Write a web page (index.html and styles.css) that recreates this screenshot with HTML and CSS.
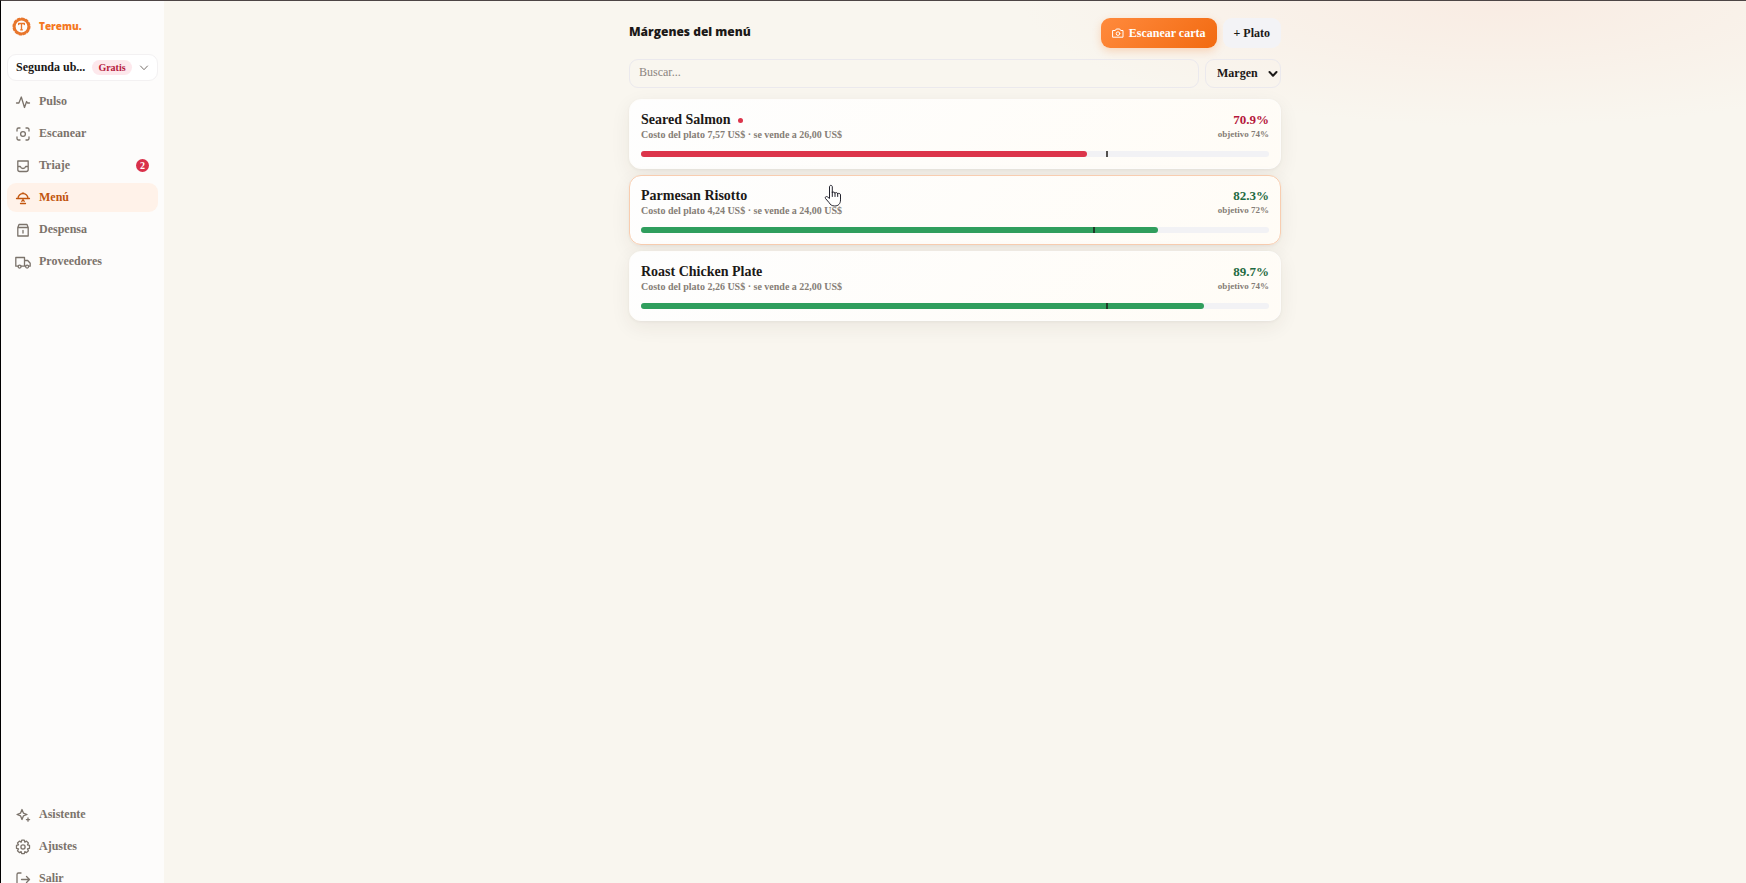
FILE: index.html
```html
<!DOCTYPE html>
<html lang="es">
<head>
    <meta charset="UTF-8">
    <meta name="viewport" content="width=device-width, initial-scale=1.0">
    <title>Teremu - Márgenes del menú</title>
    <link rel="stylesheet" href="styles.css">
</head>
<body>
    <div class="app">
        <aside class="sidebar">
            <a class="brand" href="#">
                <svg class="brand-logo" viewBox="0 0 20 20">
                    <circle cx="10" cy="10" r="7.4" fill="none" stroke="#e8762c" stroke-width="2.4"/>
                    <circle cx="10" cy="10" r="8.600" fill="none" stroke="#e8762c" stroke-width="1.800" stroke-dasharray="2.500 2"/>
                    <path d="M7 8V6.800h6V8M10 7v6.500M9 13.500h2" fill="none" stroke="#e8762c" stroke-width="1.400"/>
                </svg>
                <span>Teremu.</span>
            </a>
            <button class="location" type="button">
                <span class="location-name">Segunda ub...</span>
                <span class="plan">Gratis</span>
                <svg class="chevron" viewBox="0 0 10 10"><path d="M1.500 3l3.500 3.700L8.500 3"/></svg>
            </button>

            <nav class="nav">
                <a class="nav-item" href="#">
                    <svg class="icon" viewBox="0 0 16 16"><path d="M1.500 9h2.400L6.300 3l3.200 10.500L11.600 7.500l.9 1.500h2"/></svg>
                    <span>Pulso</span>
                </a>
                <a class="nav-item" href="#">
                    <svg class="icon" viewBox="0 0 16 16"><path d="M2 5V3.500A1.500 1.500 0 0 1 3.500 2H5M11 2h1.500A1.500 1.500 0 0 1 14 3.500V5M14 11v1.500a1.500 1.500 0 0 1-1.500 1.500H11M5 14H3.500A1.500 1.500 0 0 1 2 12.500V11"/><circle cx="8" cy="8" r="2.400"/></svg>
                    <span>Escanear</span>
                </a>
                <a class="nav-item" href="#">
                    <svg class="icon" viewBox="0 0 16 16"><path d="M2.800 3h10.400v8.500a2 2 0 0 1-2 2H4.800a2 2 0 0 1-2-2zM2.800 8.500h2.500c.5 1.400 1.400 2 2.700 2s2.200-.6 2.700-2h2.500"/></svg>
                    <span>Triaje</span>
                    <span class="count">2</span>
                </a>
                <a class="nav-item active" href="#">
                    <svg class="icon" viewBox="0 0 16 16"><path d="M1.500 8.500h13M3 8.500a5 5 0 0 1 10 0M7.200 3.200h1.600M8 8.500V10M6.800 11.200L8 10l1.200 1.200M5.500 13.500h5"/></svg>
                    <span>Menú</span>
                </a>
                <a class="nav-item" href="#">
                    <svg class="icon" viewBox="0 0 16 16"><path d="M2.800 5.500h10.400V14H2.800zM2.800 5.500L4 2.500h8l1.200 3M8 8.500v2.500"/></svg>
                    <span>Despensa</span>
                </a>
                <a class="nav-item" href="#">
                    <svg class="icon" viewBox="0 0 16 16"><path d="M3 12.200H.8V3.500h8.700v8.700H6.200M9.500 6.500h3.200l2.500 2.700v3h-1.500M9.500 12.200h1"/><circle cx="4.600" cy="12.600" r="1.500"/><circle cx="12.100" cy="12.600" r="1.500"/></svg>
                    <span>Proveedores</span>
                </a>
            </nav>

            <nav class="nav nav-bottom">
                <a class="nav-item" href="#">
                    <svg class="icon" viewBox="0 0 16 16"><path d="M7 2.500l1.400 3.600L12 7.500 8.400 8.900 7 12.500 5.600 8.900 2 7.500l3.600-1.400zM13 11v3.200M11.400 12.600h3.200"/></svg>
                    <span>Asistente</span>
                </a>
                <a class="nav-item" href="#">
                    <svg class="icon" viewBox="0 0 16 16"><path d="M6.700 1.200h2.600l.5 1.900 1.700-1 1.900 1.900-.9 1.800 2 .6v2.900l-2 .6.9 1.800-1.900 1.900-1.700-1-.5 2H6.700l-.5-2-1.800 1-1.900-1.900 1-1.800-2-.6V6.400l2-.6-1-1.800 1.900-1.900 1.800 1z"/><circle cx="8" cy="8" r="2.100"/></svg>
                    <span>Ajustes</span>
                </a>
                <a class="nav-item" href="#">
                    <svg class="icon" viewBox="0 0 16 16"><path d="M6 2H3.500A1.500 1.500 0 0 0 2 3.500v9A1.500 1.500 0 0 0 3.500 14H6M6.500 8.500h8M11.500 5.500l3 3-3 3"/></svg>
                    <span>Salir</span>
                </a>
            </nav>
        </aside>

        <main class="main">
            <div class="content">
                <header class="header">
                    <h1>Márgenes del menú</h1>
                    <button class="btn btn-primary" type="button">
                        <svg class="camera" viewBox="0 0 12 12"><path d="M1 3.500h2.300L4.300 2h3.400l1 1.500H11v6.700H1z"/><circle cx="6" cy="6.600" r="1.800"/></svg>
                        Escanear carta
                    </button>
                    <button class="btn btn-plain" type="button">+ Plato</button>
                </header>

                <div class="filters">
                    <input class="search" type="search" placeholder="Buscar..." aria-label="Buscar">
                    <div class="sort">
                        <select aria-label="Ordenar">
                            <option>Margen</option>
                        </select>
                        <svg class="sort-arrow" viewBox="0 0 10 10"><path d="M1.500 3l3.500 3.700L8.500 3"/></svg>
                    </div>
                </div>

                <div class="dishes">
                    <article class="dish low">
                        <div class="dish-top">
                            <h2>Seared Salmon <i class="dot"></i></h2>
                            <strong>70.9%</strong>
                        </div>
                        <div class="dish-info">
                            <span>Costo del plato 7,57 US$ · se vende a 26,00 US$</span>
                            <span class="goal">objetivo 74%</span>
                        </div>
                        <div class="bar">
                            <div class="fill" style="width: 71%"></div>
                            <div class="target" style="left: 74%"></div>
                        </div>
                    </article>
                    <article class="dish hover">
                        <div class="dish-top">
                            <h2>Parmesan Risotto</h2>
                            <strong>82.3%</strong>
                        </div>
                        <div class="dish-info">
                            <span>Costo del plato 4,24 US$ · se vende a 24,00 US$</span>
                            <span class="goal">objetivo 72%</span>
                        </div>
                        <div class="bar">
                            <div class="fill" style="width: 82.3%"></div>
                            <div class="target" style="left: 72%"></div>
                        </div>
                        <svg class="cursor" viewBox="0 0 18 24"><path d="M5.500 14V3c0-2.200 2.800-2.200 2.800 0v6c.3-1.400 2.600-1.200 2.700.3.500-1.200 2.600-.9 2.700.6.600-1 2.800-.6 2.800 1v5c0 3.800-2.200 6.100-5.700 6.100-3 0-4.600-1.400-5.900-3.600L1.500 14.500c-.9-1.700 1.100-2.800 2.300-1.400z"/><path d="M8.300 8v4.500M11 9v3.500M13.700 10v2.500"/></svg>
                    </article>
                    <article class="dish">
                        <div class="dish-top">
                            <h2>Roast Chicken Plate</h2>
                            <strong>89.7%</strong>
                        </div>
                        <div class="dish-info">
                            <span>Costo del plato 2,26 US$ · se vende a 22,00 US$</span>
                            <span class="goal">objetivo 74%</span>
                        </div>
                        <div class="bar">
                            <div class="fill" style="width: 89.7%"></div>
                            <div class="target" style="left: 74%"></div>
                        </div>
                    </article>
                </div>
            </div>
        </main>
    </div>
</body>
</html>
```
FILE: styles.css
```css
* {
    box-sizing: border-box;
}

body {
    margin: 0;
    overflow: hidden;
    font-family: "Liberation Serif", "Times New Roman", serif;
    font-size: 12px;
    color: #1c1917;
    background: #f9f6ef;
}

button, input, select {
    font: inherit;
    color: inherit;
}

h1, h2 {
    margin: 0;
}

a {
    color: inherit;
    text-decoration: none;
}

svg {
    flex: none;
    fill: none;
    stroke: currentColor;
    stroke-linecap: round;
    stroke-linejoin: round;
}

.app {
    display: flex;
    height: 100vh;
    border-top: 1px solid #4d4545;
    border-left: 1px solid #000;
    background: radial-gradient(ellipse 480px 125px at 86% 0, #f9ece3, rgba(249, 240, 232, 0));
}

/* Sidebar */
.sidebar {
    display: flex;
    flex-direction: column;
    flex: none;
    width: 163px;
    height: calc(100vh + 17px);
    padding: 13px 6px 8px;
    background: #fdfcfb;
}

.brand {
    display: flex;
    align-items: center;
    gap: 8px;
    height: 24px;
    padding-left: 5px;
    font-family: "Open Sans", sans-serif;
    font-size: 10px;
    font-weight: 800;
    color: #f47721;
}

.brand-logo {
    width: 19px;
    height: 19px;
}

.location {
    display: flex;
    align-items: center;
    gap: 7px;
    width: 100%;
    height: 27px;
    margin: 16px 0 6px;
    padding: 0 9px 0 8px;
    border: 1px solid #f3f1f2;
    border-radius: 9px;
    background: #fff;
    font-weight: bold;
}

.location-name {
    flex: 1;
    white-space: nowrap;
    text-align: left;
}

.plan {
    padding: 0 6px;
    border-radius: 8px;
    background: #fde8ec;
    font-size: 10px;
    line-height: 15px;
    color: #b5173c;
}

.chevron {
    width: 10px;
    height: 10px;
    color: #78716c;
}

.nav {
    display: flex;
    flex-direction: column;
    gap: 3px;
}

.nav-bottom {
    margin-top: auto;
}

.nav-item {
    display: flex;
    align-items: center;
    gap: 8px;
    height: 29px;
    padding: 0 9px 0 8px;
    border-radius: 9px;
    font-size: 12px;
    font-weight: bold;
    color: #7b736b;
}

.nav-item.active {
    background: #fff2e9;
    color: #c2560f;
}

.icon {
    width: 16px;
    height: 16px;
    stroke-width: 1.3;
}

.count {
    width: 13px;
    height: 13px;
    margin-left: auto;
    border-radius: 50%;
    background: #d9304a;
    font-size: 10px;
    line-height: 13px;
    text-align: center;
    color: #fff;
}

/* Main column */
.main {
    flex: 1;
    padding: 17px 16px;
}

.content {
    max-width: 652px;
    margin: 0 auto;
}

.header {
    display: flex;
    align-items: center;
    gap: 6px;
    margin-bottom: 11px;
}

.header h1 {
    flex: 1;
    padding-bottom: 3px;
    font-family: "Open Sans", sans-serif;
    font-size: 12px;
    font-weight: 800;
}

.btn {
    display: flex;
    align-items: center;
    gap: 5px;
    height: 30px;
    padding: 0 11px;
    border: 0;
    border-radius: 9px;
    font-weight: bold;
}

.btn-primary {
    background: linear-gradient(135deg, #ff8a3d, #f26a10);
    box-shadow: 0 3px 8px rgba(249, 115, 22, 0.25);
    color: #fff;
}

.btn-plain {
    background: #f3f3f6;
}

.camera {
    width: 12px;
    height: 12px;
}

.filters {
    display: flex;
    gap: 6px;
    margin-bottom: 11px;
}

.search,
.sort select {
    height: 29px;
    border: 1px solid #ebe9ed;
    border-radius: 9px;
    background: transparent;
    appearance: none;
}

.search {
    flex: 1;
    padding: 0 9px 2px;
}

.search::placeholder {
    color: #8b857f;
}

.sort {
    position: relative;
    width: 76px;
}

.sort select {
    width: 100%;
    padding: 0 11px 1px;
    font-weight: bold;
}

.sort-arrow {
    position: absolute;
    top: 10px;
    right: 3px;
    width: 10px;
    height: 10px;
    stroke-width: 2;
    pointer-events: none;
}

/* Dish cards */
.dishes {
    display: flex;
    flex-direction: column;
    gap: 6px;
}

.dish {
    position: relative;
    padding: 12px 11px 11px;
    border: 1px solid #fefdfb;
    border-radius: 12px;
    background: linear-gradient(135deg, #fefefe, #fffcf6);
    box-shadow: 0 6px 20px rgba(60, 40, 30, 0.07), 0 1px 3px rgba(60, 40, 30, 0.05);
}

.dish.hover {
    border-color: #f8cdb0;
}

.dish-top,
.dish-info {
    display: flex;
    justify-content: space-between;
}

.dish-top {
    line-height: 16px;
}

.dish-top h2 {
    display: flex;
    align-items: center;
    gap: 7px;
    font-size: 14px;
}

.dish-top strong {
    font-size: 13px;
    color: #1f6b43;
}

.low .dish-top strong {
    color: #b5173c;
}

.dot {
    width: 5px;
    height: 5px;
    border-radius: 50%;
    background: #dc354b;
}

.dish-info {
    font-size: 10px;
    font-weight: bold;
    line-height: 13px;
    color: #857d76;
}

.goal {
    font-size: 9px;
}

.bar {
    position: relative;
    height: 6px;
    margin-top: 10px;
    border-radius: 3px;
    background: #f2f2f5;
}

.fill {
    height: 100%;
    border-radius: 3px;
    background: #2f9e5d;
}

.low .fill {
    background: #dc354b;
}

.target {
    position: absolute;
    top: 0;
    width: 2px;
    height: 6px;
    background: #1c1917;
    opacity: 0.75;
}

.cursor {
    position: absolute;
    top: 8px;
    left: 194px;
    width: 18px;
    height: 24px;
    fill: #fff;
    stroke: #22222c;
}
```
